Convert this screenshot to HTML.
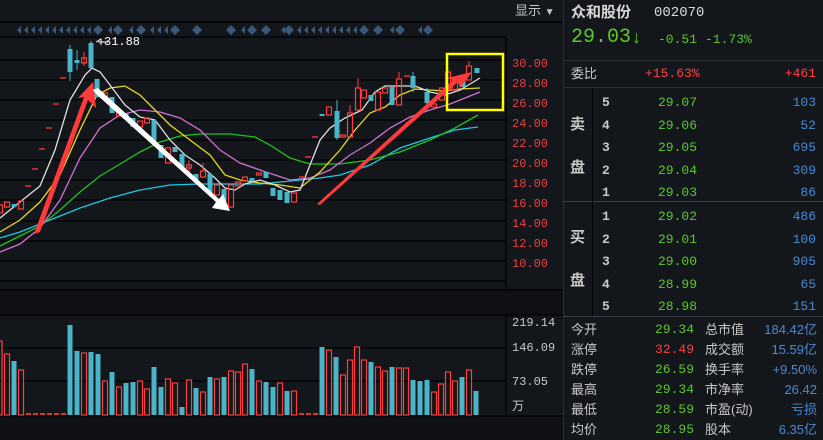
<!DOCTYPE html>
<html><head><meta charset="utf-8"><style>
*{margin:0;padding:0;box-sizing:border-box}
body{width:823px;height:440px;background:#13161b;overflow:hidden;position:relative;font-family:"Liberation Mono","Noto Sans CJK SC",monospace}
.t{position:absolute;white-space:nowrap;font-size:13px;line-height:1}
.cj{font-family:"Liberation Sans","Noto Sans CJK SC",sans-serif}
.g{color:#5cc82a}.r{color:#ff4040}.b{color:#4a8ad0}.w{color:#c8c8c8}
.ln{position:absolute;background:#2a2e35}
</style></head><body>
<svg width="823" height="440" style="position:absolute;left:0;top:0">
<rect x="0" y="0" width="563" height="440" fill="#13161b"/>
<rect x="0" y="290" width="563" height="25" fill="#0e1013"/>
<rect x="0" y="417" width="563" height="23" fill="#0e1013"/>
<g stroke="#000" stroke-width="1.2">
<line x1="0" y1="22" x2="563" y2="22"/><line x1="0" y1="37" x2="506" y2="37"/>
<line x1="0" y1="60" x2="506" y2="60"/><line x1="0" y1="80" x2="506" y2="80"/><line x1="0" y1="100" x2="506" y2="100"/><line x1="0" y1="120" x2="506" y2="120"/><line x1="0" y1="140" x2="506" y2="140"/><line x1="0" y1="160" x2="506" y2="160"/><line x1="0" y1="180" x2="506" y2="180"/><line x1="0" y1="200" x2="506" y2="200"/><line x1="0" y1="221" x2="506" y2="221"/><line x1="0" y1="241" x2="506" y2="241"/><line x1="0" y1="261" x2="506" y2="261"/><line x1="0" y1="281" x2="506" y2="281"/>
<line x1="0" y1="290" x2="563" y2="290"/><line x1="0" y1="315" x2="563" y2="315"/>
<line x1="0" y1="348" x2="506" y2="348"/><line x1="0" y1="381" x2="506" y2="381"/><line x1="0" y1="416" x2="563" y2="416"/>
<line x1="506" y1="37" x2="506" y2="290"/><line x1="506" y1="315" x2="506" y2="416"/>
</g>
<g fill="#3a5878">
<polygon points="17,30 21,26 21,34"/><polygon points="24,30 28,26 28,34"/><polygon points="31,30 35,26 35,34"/><polygon points="38,30 42,26 42,34"/><polygon points="45,30 49,26 49,34"/><polygon points="52,30 56,26 56,34"/><polygon points="59,30 63,26 63,34"/><polygon points="66,30 70,26 70,34"/><polygon points="73,30 77,26 77,34"/><polygon points="80,30 84,26 84,34"/><polygon points="87,30 91,26 91,34"/>
<polygon points="93,30 98,25 103,30 98,35"/><polygon points="108,30 112,26 112,34"/><polygon points="113,30 118,25 123,30 118,35"/><polygon points="129,30 133,26 133,34"/><polygon points="136,30 141,25 146,30 141,35"/>
<polygon points="150,30 154,26 154,34"/><polygon points="157,30 161,26 161,34"/><polygon points="164,30 168,26 168,34"/><polygon points="170,30 175,25 180,30 175,35"/><polygon points="192,30 197,25 202,30 197,35"/>
<polygon points="226,30 231,25 236,30 231,35"/><polygon points="241,30 245,26 245,34"/><polygon points="247,30 252,25 257,30 252,35"/><polygon points="261,30 266,25 271,30 266,35"/><polygon points="281,30 285,26 285,34"/><polygon points="284,30 289,25 294,30 289,35"/>
<polygon points="297,30 301,26 301,34"/><polygon points="304,30 308,26 308,34"/><polygon points="311,30 315,26 315,34"/><polygon points="318,30 322,26 322,34"/><polygon points="325,30 329,26 329,34"/><polygon points="332,30 336,26 336,34"/><polygon points="339,30 343,26 343,34"/><polygon points="346,30 350,26 350,34"/><polygon points="353,30 357,26 357,34"/>
<polygon points="359,30 364,25 369,30 364,35"/><polygon points="373,30 378,25 383,30 378,35"/><polygon points="390,30 394,26 394,34"/><polygon points="395,30 400,25 405,30 400,35"/><polygon points="418,30 422,26 422,34"/><polygon points="423,30 428,25 433,30 428,35"/>
</g>
<!-- MA lines -->
<g fill="none" stroke-width="1.3">
<polyline stroke="#1ec8e0" points="0,238 20,232 50,220 80,208 110,198 140,190 170,185 200,184 230,184 260,184 280,182 300,180 320,178 340,175 370,165 400,148 430,138 455,130 478,127"/>
<polyline stroke="#22c020" points="0,246 20,236 40,226 60,210 80,192 100,176 120,164 140,152 160,142 180,136 200,134 230,134 255,137 270,145 290,158 310,164 340,164 370,160 400,152 430,140 455,128 478,115"/>
<polyline stroke="#d070d0" points="0,252 20,244 40,228 60,200 80,158 100,128 120,115 140,110 160,112 180,118 200,130 220,150 240,163 260,170 275,175 290,180 310,178 330,170 350,155 370,143 390,128 410,117 430,110 450,104 465,98 480,92"/>
<polyline stroke="#e8d820" points="0,232 20,220 40,202 60,175 80,130 97,95 110,88 125,86 140,95 155,110 170,125 190,140 210,155 225,175 240,180 260,183 280,185 300,188 320,172 340,150 355,130 370,113 385,107 400,95 415,89 430,90 445,91 460,89 480,88"/>
<polyline stroke="#e0e0e0" points="0,218 20,202 40,186 55,150 70,100 85,75 92,68 100,72 110,85 125,105 140,117 155,120 170,140 185,155 200,165 215,178 225,188 235,190 245,184 260,180 275,185 290,192 300,190 310,165 320,140 330,128 345,118 362,110 375,92 385,86 400,86 415,86 430,92 445,95 460,90 470,84 480,78"/>
</g>
<!-- candles -->
<g fill="#4ab4c8">
<rect x="11.5" y="204" width="5" height="3"/><rect x="67.5" y="49" width="5" height="23"/><rect x="74.5" y="60" width="5" height="3"/><rect x="88.5" y="43" width="5" height="25"/><rect x="94.5" y="79" width="5" height="18"/><rect x="109.5" y="97" width="5" height="16"/><rect x="123.5" y="113" width="5" height="4"/><rect x="130.5" y="118" width="5" height="9"/><rect x="151.5" y="120" width="5" height="23"/><rect x="158.5" y="145" width="5" height="13"/><rect x="172.5" y="147" width="5" height="5"/><rect x="179.5" y="154" width="5" height="15"/><rect x="193.5" y="174" width="5" height="6"/><rect x="207.5" y="174" width="5" height="19"/><rect x="221.5" y="189" width="5" height="12"/><rect x="249.5" y="178" width="5" height="3"/><rect x="263.5" y="172" width="5" height="6"/><rect x="270.5" y="188" width="5" height="8"/><rect x="277.5" y="190" width="5" height="10"/><rect x="284.5" y="192" width="5" height="11"/><rect x="319.5" y="114" width="5" height="2"/><rect x="334.5" y="111" width="5" height="27"/><rect x="368.5" y="95" width="5" height="6"/><rect x="389.5" y="87" width="5" height="18"/><rect x="410.5" y="76" width="5" height="12"/><rect x="424.5" y="92" width="5" height="11"/><rect x="460.5" y="79" width="5" height="8"/><rect x="474.5" y="68" width="5" height="5"/>
</g>
<g fill="none" stroke="#ff3d3d" stroke-width="1.2">
<rect x="-1.5" y="205" width="4" height="8"/><rect x="4.5" y="202" width="5" height="5"/><rect x="18.5" y="201" width="5" height="8"/><rect x="81.5" y="58" width="5" height="5"/><rect x="102.5" y="93" width="5" height="4"/><rect x="116.5" y="110" width="5" height="6"/><rect x="137.5" y="121" width="5" height="6"/><rect x="144.5" y="118" width="5" height="5"/><rect x="165.5" y="148" width="5" height="15"/><rect x="186.5" y="165" width="5" height="3"/><rect x="200.5" y="171" width="5" height="6"/><rect x="214.5" y="185" width="5" height="10"/><rect x="228.5" y="185" width="5" height="22"/><rect x="235.5" y="182" width="5" height="4"/><rect x="242.5" y="177" width="5" height="4"/><rect x="256.5" y="173" width="5" height="2"/><rect x="291.5" y="193" width="5" height="9"/><rect x="326.5" y="107" width="5" height="8"/><rect x="340.5" y="135" width="5" height="2"/><rect x="347.5" y="113" width="5" height="24"/><rect x="355.5" y="88" width="5" height="22"/><rect x="361.5" y="90" width="5" height="8"/><rect x="375.5" y="92" width="5" height="18"/><rect x="382.5" y="88" width="5" height="5"/><rect x="396.5" y="79" width="5" height="26"/><rect x="431.5" y="104" width="5" height="3"/><rect x="439.5" y="88" width="5" height="12"/><rect x="445.5" y="72" width="5" height="18"/><rect x="452.5" y="80" width="5" height="10"/><rect x="466.5" y="66" width="5" height="14"/>
</g>
<g stroke="#ff3d3d" stroke-width="1"><line x1="189" y1="160" x2="189" y2="177"/><line x1="203" y1="163" x2="203" y2="171"/><line x1="84" y1="52" x2="84" y2="66"/><line x1="350" y1="105" x2="350" y2="113"/><line x1="399" y1="72" x2="399" y2="79"/><line x1="469" y1="61" x2="469" y2="66"/><line x1="358" y1="78" x2="358" y2="88"/></g>
<g stroke="#4ab4c8" stroke-width="1"><line x1="70" y1="45" x2="70" y2="81"/><line x1="77" y1="50" x2="77" y2="70"/><line x1="91" y1="41" x2="91" y2="43"/><line x1="337" y1="100" x2="337" y2="140"/><line x1="413" y1="72" x2="413" y2="92"/><line x1="427" y1="88" x2="427" y2="110"/></g>
<g fill="#b02a2a"><rect x="25" y="185" width="6" height="2"/><rect x="32" y="168" width="6" height="2"/><rect x="39" y="148" width="6" height="2"/><rect x="46" y="127" width="6" height="2"/><rect x="53" y="103" width="6" height="2"/><rect x="60" y="77" width="6" height="2"/><rect x="299" y="176" width="6" height="2"/><rect x="305" y="156" width="6" height="2"/><rect x="312" y="136" width="6" height="2"/><rect x="404" y="75" width="6" height="2"/></g>
<!-- arrows -->
<polygon fill="#ff3a3a" points="34,234 40,232 88,100 96,108 93,82 78,98 84,97 "/>
<polygon fill="#ffffff" points="93,90 96,94 216,202 212,208 230,211 223,194 219,199 98,88"/>
<polygon fill="#ff3a3a" points="317,204 320,205 458,82 460,88 472,72 447,78 453,80 "/>
<rect x="447" y="54" width="56" height="56" fill="none" stroke="#ffff00" stroke-width="2.5"/>
<!-- volume -->
<g fill="#4ab4c8">
<rect x="11.5" y="361" width="5" height="54"/><rect x="67.5" y="325" width="5" height="90"/><rect x="74.5" y="351" width="5" height="64"/><rect x="88.5" y="352" width="5" height="63"/><rect x="95.5" y="354" width="5" height="61"/><rect x="109.5" y="372" width="5" height="43"/><rect x="123.5" y="383" width="5" height="32"/><rect x="130.5" y="382" width="5" height="33"/><rect x="151.5" y="367" width="5" height="48"/><rect x="158.5" y="387" width="5" height="28"/><rect x="179.5" y="407" width="5" height="8"/><rect x="193.5" y="388" width="5" height="27"/><rect x="207.5" y="377" width="5" height="38"/><rect x="221.5" y="377" width="5" height="38"/><rect x="249.5" y="369" width="5" height="46"/><rect x="263.5" y="382" width="5" height="33"/><rect x="270.5" y="387" width="5" height="28"/><rect x="284.5" y="391" width="5" height="24"/><rect x="319.5" y="347" width="5" height="68"/><rect x="333.5" y="357" width="5" height="58"/><rect x="368.5" y="362" width="5" height="53"/><rect x="389.5" y="367" width="5" height="48"/><rect x="410.5" y="380" width="5" height="35"/><rect x="417.5" y="381" width="5" height="34"/><rect x="424.5" y="380" width="5" height="35"/><rect x="459.5" y="377" width="5" height="38"/><rect x="473.5" y="391" width="5" height="24"/>
</g>
<g fill="none" stroke="#ff3d3d" stroke-width="1.2">
<rect x="-2" y="341" width="4" height="74"/><rect x="4.5" y="354" width="5" height="61"/><rect x="18.5" y="370" width="5" height="45"/><rect x="81.5" y="353" width="5" height="62"/><rect x="102.5" y="381" width="5" height="34"/><rect x="116.5" y="387" width="5" height="28"/><rect x="137.5" y="381" width="5" height="34"/><rect x="144.5" y="389" width="5" height="26"/><rect x="165.5" y="379" width="5" height="36"/><rect x="172.5" y="383" width="5" height="32"/><rect x="186.5" y="380" width="5" height="35"/><rect x="200.5" y="392" width="5" height="23"/><rect x="214.5" y="379" width="5" height="36"/><rect x="228.5" y="371" width="5" height="44"/><rect x="235.5" y="372" width="5" height="43"/><rect x="242.5" y="364" width="5" height="51"/><rect x="256.5" y="381" width="5" height="34"/><rect x="277.5" y="383" width="5" height="32"/><rect x="291.5" y="391" width="5" height="24"/><rect x="326.5" y="350" width="5" height="65"/><rect x="340.5" y="375" width="5" height="40"/><rect x="347.5" y="360" width="5" height="55"/><rect x="354.5" y="347" width="5" height="68"/><rect x="361.5" y="360" width="5" height="55"/><rect x="375.5" y="367" width="5" height="48"/><rect x="382.5" y="371" width="5" height="44"/><rect x="396.5" y="368" width="5" height="47"/><rect x="403.5" y="368" width="5" height="47"/><rect x="431.5" y="392" width="5" height="23"/><rect x="438.5" y="384" width="5" height="31"/><rect x="445.5" y="372" width="5" height="43"/><rect x="452.5" y="381" width="5" height="34"/><rect x="466.5" y="370" width="5" height="45"/>
</g>
<g fill="#e03030"><rect x="26" y="413" width="5" height="2"/><rect x="33" y="413" width="5" height="2"/><rect x="40" y="413" width="5" height="2"/><rect x="47" y="413" width="5" height="2"/><rect x="54" y="413" width="5" height="2"/><rect x="61" y="413" width="5" height="2"/><rect x="299" y="413" width="5" height="2"/><rect x="306" y="413" width="5" height="2"/><rect x="313" y="413" width="5" height="2"/></g>
<line x1="98" y1="42" x2="108" y2="42" stroke="#fff" stroke-width="1"/><polyline points="96,42 101,39 101,45" fill="none" stroke="#fff"/>
</svg>
<div class="t w" style="left:104px;top:36px;font-size:12px;color:#fff">31.88</div>
<div class="t w cj" style="left:515px;top:4px;font-size:13px">显示 <span style="font-size:10px">▼</span></div>
<div class="t r" style="left:512px;top:54px;font-size:12px;color:#e84040;line-height:20px">30.00<br>28.00<br>26.00<br>24.00<br>22.00<br>20.00<br>18.00<br>16.00<br>14.00<br>12.00<br>10.00</div>
<div class="t w" style="left:512px;top:317px;font-size:12px">219.14</div>
<div class="t w" style="left:512px;top:342px;font-size:12px">146.09</div>
<div class="t w" style="left:512px;top:376px;font-size:12px">73.05</div>
<div class="t w cj" style="left:512px;top:400px;font-size:12px">万</div>
<!-- right panel -->
<div style="position:absolute;left:563px;top:0;width:260px;height:440px;background:#13161b;border-left:1px solid #2a2e35"></div>
<div class="ln" style="left:563px;top:60px;width:260px;height:1px"></div>
<div class="ln" style="left:563px;top:87px;width:260px;height:1px"></div>
<div class="ln" style="left:563px;top:201px;width:260px;height:1px;background:#3a3e46"></div>
<div class="ln" style="left:563px;top:316px;width:260px;height:1px;background:#3a3e46"></div>
<div class="ln" style="left:592px;top:88px;width:1px;height:228px;background:#000"></div>
<div class="t cj" style="left:571px;top:5px;font-size:15px;font-weight:bold;color:#d8d8d8">众和股份</div>
<div class="t" style="left:654px;top:6px;font-size:14px;color:#d8d8d8">002070</div>
<div class="t g" style="left:571px;top:28px;font-size:20px">29.03</div>
<div class="t g cj" style="left:632px;top:28px;font-size:18px;font-weight:bold">↓</div>
<div class="t g" style="left:658px;top:33px">-0.51</div>
<div class="t g" style="left:705px;top:33px">-1.73%</div>
<div class="t w cj" style="left:571px;top:67px">委比</div>
<div class="t r" style="left:645px;top:67px">+15.63%</div>
<div class="t r" style="left:766px;top:67px;width:50px;text-align:right;left:766px">+461</div>
<div class="t w cj" style="left:570px;top:117px;font-size:15px;font-weight:bold">卖</div>
<div class="t w cj" style="left:570px;top:160px;font-size:15px;font-weight:bold">盘</div>
<div class="t w cj" style="left:570px;top:230px;font-size:15px;font-weight:bold">买</div>
<div class="t w cj" style="left:570px;top:273px;font-size:15px;font-weight:bold">盘</div>
<div class="t w" style="left:602px;top:92px;line-height:22.5px;font-weight:bold">5<br>4<br>3<br>2<br>1</div>
<div class="t g" style="left:658px;top:92px;line-height:22.5px">29.07<br>29.06<br>29.05<br>29.04<br>29.03</div>
<div class="t b" style="left:766px;top:92px;width:50px;text-align:right;line-height:22.5px">103<br>52<br>695<br>309<br>86</div>
<div class="t w" style="left:602px;top:206px;line-height:22.5px;font-weight:bold">1<br>2<br>3<br>4<br>5</div>
<div class="t g" style="left:658px;top:206px;line-height:22.5px">29.02<br>29.01<br>29.00<br>28.99<br>28.98</div>
<div class="t b" style="left:766px;top:206px;width:50px;text-align:right;line-height:22.5px">486<br>100<br>905<br>65<br>151</div>
<div class="t w cj" style="left:571px;top:320px;line-height:20px">今开<br>涨停<br>跌停<br>最高<br>最低<br>均价</div>
<div class="t g" style="left:644px;top:320px;width:50px;text-align:right;line-height:20px">29.34<br><span class="r">32.49</span><br>26.59<br>29.34<br>28.59<br>28.95</div>
<div class="t w cj" style="left:705px;top:320px;line-height:20px">总市值<br>成交额<br>换手率<br>市净率<br>市盈(动)<br>股本</div>
<div class="t b cj" style="left:746px;top:320px;width:71px;text-align:right;line-height:20px">184.42亿<br>15.59亿<br>+9.50%<br>26.42<br>亏损<br>6.35亿</div>
</body></html>
